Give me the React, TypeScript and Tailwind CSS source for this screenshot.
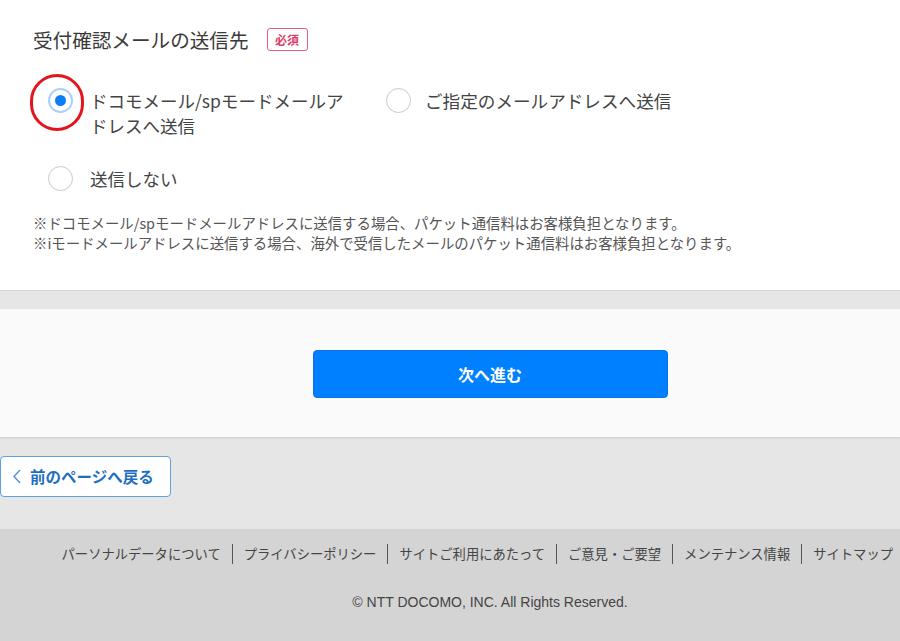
import React from "react";

function Radio({ checked }: { checked?: boolean }) {
  return checked ? (
    <span className="flex h-[25px] w-[25px] shrink-0 items-center justify-center rounded-full border-2 border-[#a9d0f6] bg-white">
      <span className="block h-[11px] w-[11px] rounded-full bg-[#0b7ef5]" />
    </span>
  ) : (
    <span className="block h-[25px] w-[25px] shrink-0 rounded-full border-[1.5px] border-[#c9c9c9] bg-white" />
  );
}

const links = [
  "パーソナルデータについて",
  "プライバシーポリシー",
  "サイトご利用にあたって",
  "ご意見・ご要望",
  "メンテナンス情報",
  "サイトマップ",
];

export default function App() {
  return (
    <div className="flex h-[641px] w-[900px] flex-col overflow-hidden bg-[#e6e6e6] font-['Noto_Sans_CJK_JP','Noto_Sans',sans-serif]">
      {/* form panel */}
      <section className="relative h-[291px] shrink-0 border-b border-[#d6d6d6] bg-white pl-[33px] pt-[28px]">
        <div className="flex h-[23px] items-center">
          <h2 className="text-[19.6px] font-normal leading-[23px] text-[#3a3a3a]">受付確認メールの送信先</h2>
          <span className="ml-[18px] flex h-[23px] w-[41px] items-center justify-center rounded-[3px] border-[1.5px] border-[#e0607e] text-[12px] font-bold leading-none text-[#dc3d6a]">
            必須
          </span>
        </div>

        <div className="mt-[37px] flex items-start pl-[15px]">
          <label className="flex items-start gap-[17px]">
            <Radio checked />
            <span className="w-[262px] text-[17.5px] leading-[25px] text-[#444]">
              ドコモメール/spモードメールアドレスへ送信
            </span>
          </label>
          <label className="ml-[34px] flex items-start gap-[14px]">
            <Radio />
            <span className="text-[17.6px] leading-[25px] text-[#444]">ご指定のメールアドレスへ送信</span>
          </label>
        </div>

        <div className="mt-[28px] flex items-start pl-[15px]">
          <label className="flex items-start gap-[17px]">
            <Radio />
            <span className="text-[17.5px] leading-[25px] text-[#444]">送信しない</span>
          </label>
        </div>

        <div className="mt-[22px] text-[14.4px] leading-[20px] text-[#555]">
          <p>※ドコモメール/spモードメールアドレスに送信する場合、パケット通信料はお客様負担となります。</p>
          <p>※iモードメールアドレスに送信する場合、海外で受信したメールのパケット通信料はお客様負担となります。</p>
        </div>

        {/* red annotation circle */}
        <span className="pointer-events-none absolute left-[30px] top-[74px] h-[57px] w-[54px] rounded-full border-[3px] border-[#e3141d]" />
      </section>

      <div className="h-[18px] shrink-0" />

      {/* next button panel */}
      <section className="flex h-[128px] shrink-0 justify-center bg-[#fafafa] pl-[80px] pt-[41px] shadow-[0_1px_2px_rgba(0,0,0,0.12)]">
        <button className="flex h-[48px] w-[355px] items-center justify-center rounded-[4px] border border-[#0a74e0] bg-[#0080ff] text-[16px] font-bold text-white">
          次へ進む
        </button>
      </section>

      {/* back button area */}
      <div className="h-[92px] shrink-0 pt-[19px]">
        <button className="flex h-[41px] w-[171px] items-center rounded-[4px] border border-[#5da2e2] bg-white pl-[12px]">
          <svg width="8" height="15" viewBox="0 0 8 15" className="mr-[9px]">
            <polyline points="7,1 1,7.5 7,14" fill="none" stroke="#4a93dc" strokeWidth="1.4" />
          </svg>
          <span className="text-[15.5px] font-bold leading-none text-[#1f6fc0]">前のページへ戻る</span>
        </button>
      </div>

      {/* footer */}
      <footer className="flex-1 bg-[#d4d4d4] pt-[15px]">
        <ul className="flex items-center justify-end pr-[7px] text-[13.3px] leading-[20px] text-[#444]">
          {links.map((l, i) => (
            <li key={l} className="flex items-center">
              {i > 0 && <span className="mx-[11px] block h-[20px] w-px bg-[#555]" />}
              <span>{l}</span>
            </li>
          ))}
        </ul>
        <p className="mt-[28px] pl-[80px] text-center font-['Liberation_Sans',sans-serif] text-[14px] leading-[20px] text-[#444]">
          © NTT DOCOMO, INC. All Rights Reserved.
        </p>
      </footer>
    </div>
  );
}
